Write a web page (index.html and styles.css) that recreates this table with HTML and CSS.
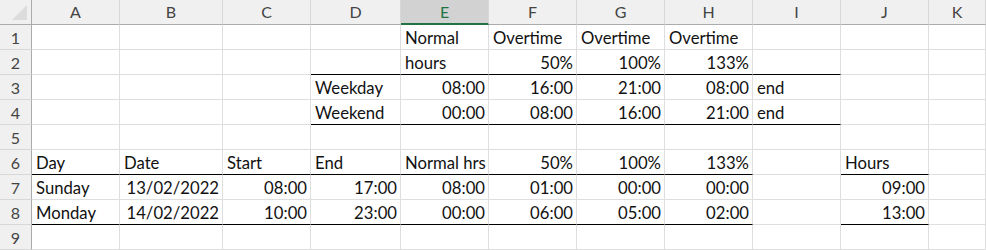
FILE: index.html
```html
<!DOCTYPE html>
<html>
<head>
<meta charset="utf-8">
<link rel="stylesheet" href="styles.css">
</head>
<body>
<div class="sheet">
  <div class="corner"><svg width="31" height="24" viewBox="0 0 31 24"><polygon points="12,20 27,20 27,5" fill="#dcdcdc"/></svg></div>
  <div class="ch">A</div><div class="ch">B</div><div class="ch">C</div><div class="ch">D</div><div class="ch sel">E</div><div class="ch">F</div><div class="ch">G</div><div class="ch">H</div><div class="ch">I</div><div class="ch">J</div><div class="ch">K</div>

  <div class="rh">1</div>
  <div class="c"></div><div class="c"></div><div class="c"></div><div class="c"></div><div class="c">Normal</div><div class="c">Overtime</div><div class="c">Overtime</div><div class="c">Overtime</div><div class="c"></div><div class="c"></div><div class="c"></div>

  <div class="rh">2</div>
  <div class="c"></div><div class="c"></div><div class="c"></div><div class="c bb"></div><div class="c bb">hours</div><div class="c bb r">50%</div><div class="c bb r">100%</div><div class="c bb r">133%</div><div class="c bb"></div><div class="c"></div><div class="c"></div>

  <div class="rh">3</div>
  <div class="c"></div><div class="c"></div><div class="c"></div><div class="c">Weekday</div><div class="c r">08:00</div><div class="c r">16:00</div><div class="c r">21:00</div><div class="c r">08:00</div><div class="c">end</div><div class="c"></div><div class="c"></div>

  <div class="rh">4</div>
  <div class="c"></div><div class="c"></div><div class="c"></div><div class="c bb">Weekend</div><div class="c bb r">00:00</div><div class="c bb r">08:00</div><div class="c bb r">16:00</div><div class="c bb r">21:00</div><div class="c bb">end</div><div class="c"></div><div class="c"></div>

  <div class="rh">5</div>
  <div class="c"></div><div class="c"></div><div class="c"></div><div class="c"></div><div class="c"></div><div class="c"></div><div class="c"></div><div class="c"></div><div class="c"></div><div class="c"></div><div class="c"></div>

  <div class="rh">6</div>
  <div class="c bb">Day</div><div class="c bb">Date</div><div class="c bb">Start</div><div class="c bb">End</div><div class="c bb">Normal hrs</div><div class="c bb r">50%</div><div class="c bb r">100%</div><div class="c bb r">133%</div><div class="c"></div><div class="c bb">Hours</div><div class="c"></div>

  <div class="rh">7</div>
  <div class="c">Sunday</div><div class="c r">13/02/2022</div><div class="c r">08:00</div><div class="c r">17:00</div><div class="c r">08:00</div><div class="c r">01:00</div><div class="c r">00:00</div><div class="c r">00:00</div><div class="c"></div><div class="c r">09:00</div><div class="c"></div>

  <div class="rh">8</div>
  <div class="c bb">Monday</div><div class="c bb r">14/02/2022</div><div class="c bb r">10:00</div><div class="c bb r">23:00</div><div class="c bb r">00:00</div><div class="c bb r">06:00</div><div class="c bb r">05:00</div><div class="c bb r">02:00</div><div class="c"></div><div class="c bb r">13:00</div><div class="c"></div>

  <div class="rh">9</div>
  <div class="c"></div><div class="c"></div><div class="c"></div><div class="c"></div><div class="c"></div><div class="c"></div><div class="c"></div><div class="c"></div><div class="c"></div><div class="c"></div><div class="c"></div>
</div>
</body>
</html>
```
FILE: styles.css
```css
html, body {
  margin: 0;
  padding: 0;
  background: #ffffff;
}
body {
  width: 986px;
  height: 250px;
  overflow: hidden;
  font-family: Lato, "Liberation Sans", sans-serif;
  font-size: 16.7px;
  color: #000;
}
.sheet {
  display: grid;
  grid-template-columns: 32px 88px 103px 88px 90px 88px 88px 88px 88px 88px 88px 1fr;
  grid-template-rows: 25px repeat(9, 25px);
  width: 986px;
}
.sheet > div {
  box-sizing: border-box;
  overflow: hidden;
  white-space: nowrap;
}
.corner {
  background: #f0f0f0;
  border-right: 1px solid #ababab;
  border-bottom: 1px solid #ababab;
}
.corner svg {
  display: block;
}
.ch {
  background: #f0f0f0;
  border-right: 1px solid #d8d8d8;
  border-bottom: 1px solid #ababab;
  color: #444;
  font-size: 16px;
  text-align: center;
  line-height: 22px;
  padding-top: 1px;
}
.ch.sel {
  background: #d2d2d2;
  color: #217346;
  border-bottom: 2px solid #217346;
}
.rh {
  background: #f0f0f0;
  border-right: 1px solid #ababab;
  border-bottom: 1px solid #d8d8d8;
  color: #444;
  font-size: 16px;
  text-align: center;
  line-height: 22px;
  padding-top: 2px;
}
.c {
  border-right: 1px solid #dedede;
  border-bottom: 1px solid #dedede;
  line-height: 22px;
  padding: 2px 3px 0 4px;
  color: #111;
}
.c.r {
  text-align: right;
}
.c.bb {
  border-bottom-color: #000;
}
```
